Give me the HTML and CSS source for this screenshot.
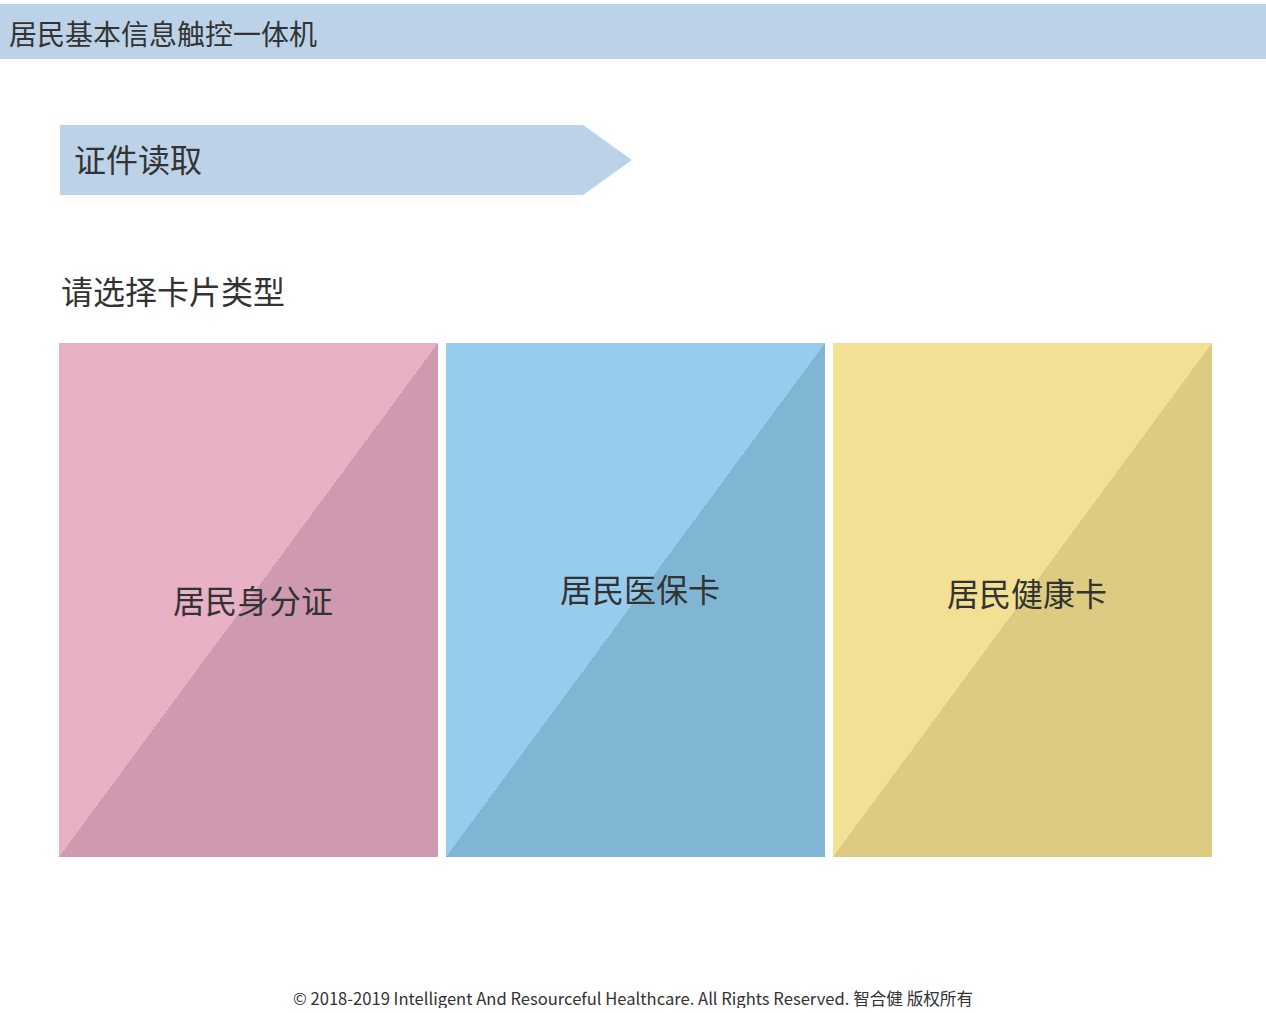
FILE: index.html
```html
<!DOCTYPE html>
<html lang="zh-CN">
<head>
<meta charset="utf-8">
<title>居民基本信息触控一体机</title>
<link rel="stylesheet" href="styles.css">
</head>
<body>
<header class="topbar">居民基本信息触控一体机</header>
<main class="content">
  <div class="banner">证件读取</div>
  <h2 class="subtitle">请选择卡片类型</h2>
  <div class="cards">
    <div class="card card-pink"><span class="label label-1">居民身分证</span></div>
    <div class="card card-blue"><span class="label label-2">居民医保卡</span></div>
    <div class="card card-yellow"><span class="label label-3">居民健康卡</span></div>
  </div>
</main>
<footer class="footer">© 2018-2019 Intelligent And Resourceful Healthcare. All Rights Reserved. 智合健 版权所有</footer>
</body>
</html>
```
FILE: styles.css
```css
html, body {
  margin: 0;
  padding: 0;
  background: #ffffff;
}
body {
  padding-top: 4px;
  font-family: "Noto Sans CJK SC", "Noto Sans", sans-serif;
  color: #333333;
}
.topbar {
  height: 55px;
  line-height: 59px;
  background: #bcd2e8;
  font-size: 28px;
  padding-left: 9px;
  color: #333;
  box-sizing: border-box;
  overflow: hidden;
}
.content {
  padding-left: 60px;
}
.banner {
  margin-top: 66px;
  width: 572px;
  height: 70px;
  line-height: 66px;
  background: #bcd2e8;
  clip-path: polygon(0 0, 523px 0, 100% 50%, 523px 100%, 0 100%);
  font-size: 32px;
  padding-left: 14px;
  box-sizing: border-box;
  color: #333;
}
.subtitle {
  margin: 75px 0 0 0;
  padding-left: 1px;
  font-size: 32px;
  font-weight: normal;
  line-height: 40px;
  height: 40px;
  color: #333;
}
.cards {
  margin-top: 33px;
  margin-left: -1px;
  display: grid;
  grid-template-columns: 379px 379px 379px;
  column-gap: 8px;
}
.card {
  height: 514px;
  display: flex;
  justify-content: center;
  align-items: center;
  padding-left: 9px;
  box-sizing: border-box;
}
.card-pink {
  background: linear-gradient(to bottom right, #e8b1c6 50%, #cf9ab0 50%);
}
.card-blue {
  background: linear-gradient(to bottom right, #98ccee 50%, #80b6d4 50%);
}
.card-yellow {
  background: linear-gradient(to bottom right, #f2e095 50%, #ddcb82 50%);
}
.label {
  font-size: 32px;
  line-height: 40px;
  color: #333;
}
.label-1 { margin-top: -2px; }
.label-2 { margin-top: -24px; }
.label-3 { margin-top: -16px; }
.footer {
  margin-top: 131px;
  text-align: center;
  font-size: 16.6px;
  line-height: 20px;
  color: #333;
}
```
